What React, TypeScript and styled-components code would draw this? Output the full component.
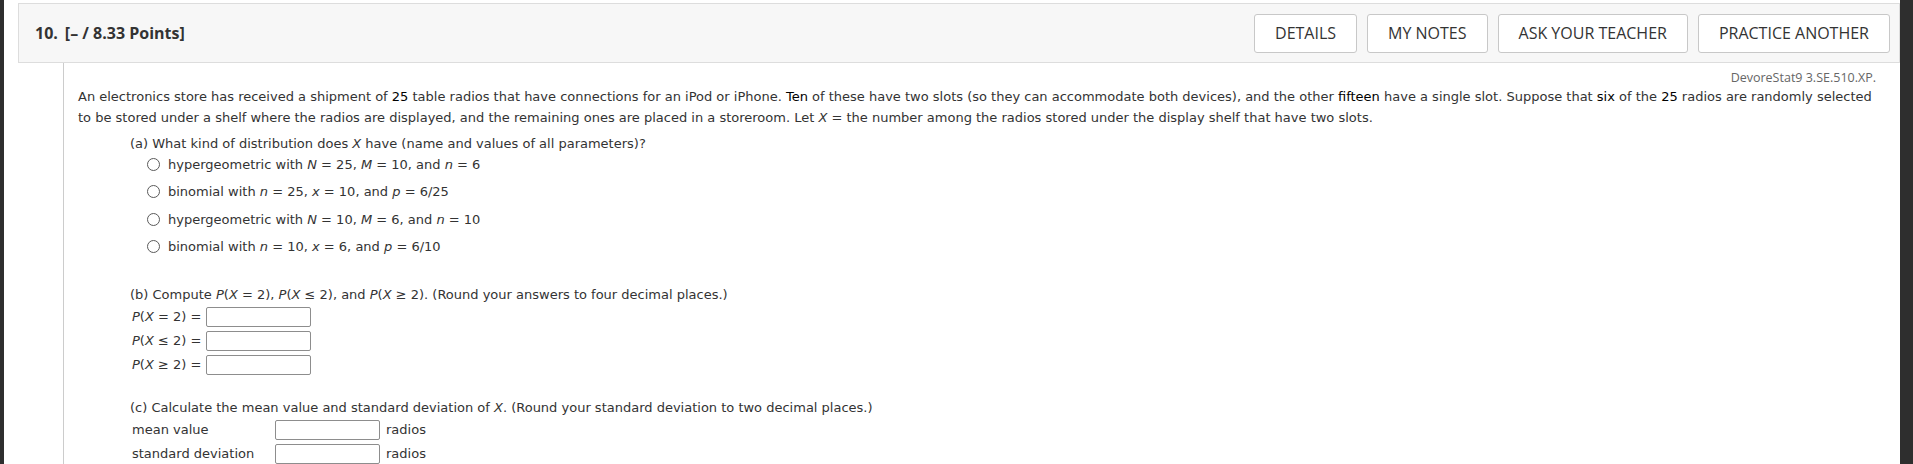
import React from 'react'
import styled, { createGlobalStyle } from 'styled-components'

const GlobalStyle = createGlobalStyle`
    html, body {
        margin: 0;
        background: #ffffff;
        overflow: hidden;
    }
`

const Page = styled.div`
    display: flex;
    height: 464px;
    font-family: "DejaVu Sans", Verdana, sans-serif;
    color: #333333;
`

const EdgeStrip = styled.div<{ $width: number }>`
    width: ${p => p.$width}px;
    flex-shrink: 0;
    background: #2e2e2e;
`

const Main = styled.div`
    flex: 1;
    min-width: 0;
    padding: 3px 0 0 14px;
    display: flex;
    flex-direction: column;
`

const Header = styled.div`
    height: 60px;
    box-sizing: border-box;
    border: 1px solid #dddddd;
    background: #f7f7f7;
    display: flex;
    align-items: center;
    justify-content: space-between;
    padding: 0 9px 0 16px;
    font-family: "Open Sans", "Liberation Sans", sans-serif;
`

const Title = styled.div`
    font-size: 16px;
    font-weight: 700;
    color: #333333;

    .num {
        margin-right: 7px;
    }
`

const ButtonRow = styled.div`
    display: flex;
    gap: 10px;
`

const HeaderButton = styled.button`
    height: 39px;
    box-sizing: border-box;
    padding: 0 20px;
    border: 1px solid #c8c8c8;
    border-radius: 3px;
    background: #ffffff;
    font-family: "Open Sans", "Liberation Sans", sans-serif;
    font-size: 16px;
    font-weight: 500;
    color: #333333;
    text-transform: uppercase;
    cursor: pointer;
`

const Body = styled.div`
    flex: 1;
    margin-left: 45px;
    border-left: 1px solid #cccccc;
    padding: 7px 20px 0 14px;
    font-size: 13px;
`

const Source = styled.div`
    text-align: right;
    font-family: "Open Sans", "Liberation Sans", sans-serif;
    font-size: 12.5px;
    line-height: 16px;
    color: #666666;
    padding-right: 4px;
`

const Paragraph = styled.p`
    margin: 0;
    line-height: 21px;
`

const Hi = styled.span`
    color: #000000;
`

const V = styled.i`
    font-style: italic;
`

const Part = styled.div<{ $top: number }>`
    margin-top: ${p => p.$top}px;
    padding-left: 52px;
`

const Question = styled.div`
    line-height: 20px;
`

const Options = styled.div`
    display: flex;
    flex-direction: column;
    gap: 7.5px;
    padding-left: 17px;
`

const Option = styled.label`
    display: flex;
    align-items: center;
    height: 20px;
    gap: 8px;
`

const Radio = styled.span`
    width: 13px;
    height: 13px;
    box-sizing: border-box;
    border: 1px solid #5a5a5a;
    border-radius: 50%;
    background: #ffffff;
    flex-shrink: 0;
`

const AnswerGrid = styled.div<{ $cols: string }>`
    display: grid;
    grid-template-columns: ${p => p.$cols};
    row-gap: 4px;
    align-items: center;
    margin-top: 2px;
    padding-left: 2px;
`

const Label = styled.span`
    line-height: 20px;
    white-space: nowrap;
`

const AnswerInput = styled.input`
    width: 105px;
    height: 20px;
    box-sizing: border-box;
    border: 1px solid #8d8d8d;
    border-radius: 2px;
    background: #ffffff;
    margin: 0;
    padding: 0 3px;
`

const Unit = styled.span`
    margin-left: 6px;
    line-height: 20px;
`

const options = [
    <>hypergeometric with <V>N</V> = 25, <V>M</V> = 10, and <V>n</V> = 6</>,
    <>binomial with <V>n</V> = 25, <V>x</V> = 10, and <V>p</V> = 6/25</>,
    <>hypergeometric with <V>N</V> = 10, <V>M</V> = 6, and <V>n</V> = 10</>,
    <>binomial with <V>n</V> = 10, <V>x</V> = 6, and <V>p</V> = 6/10</>,
]

const probRows = [
    <><V>P</V>(<V>X</V> = 2) =</>,
    <><V>P</V>(<V>X</V> ≤ 2) =</>,
    <><V>P</V>(<V>X</V> ≥ 2) =</>,
]

const App: React.FC = () => {
    return (
        <>
            <GlobalStyle />
            <Page>
                <EdgeStrip $width={4} />
                <Main>
                    <Header>
                        <Title>
                            <span className="num">10.</span>
                            [– / 8.33 Points]
                        </Title>
                        <ButtonRow>
                            <HeaderButton>Details</HeaderButton>
                            <HeaderButton>My Notes</HeaderButton>
                            <HeaderButton>Ask Your Teacher</HeaderButton>
                            <HeaderButton>Practice Another</HeaderButton>
                        </ButtonRow>
                    </Header>
                    <Body>
                        <Source>DevoreStat9 3.SE.510.XP.</Source>
                        <Paragraph>
                            An electronics store has received a shipment of <Hi>25</Hi> table radios that have connections for an iPod or iPhone. <Hi>Ten</Hi> of these have two slots (so they can accommodate both devices), and the other <Hi>fifteen</Hi> have a single slot. Suppose that <Hi>six</Hi> of the <Hi>25</Hi> radios are randomly selected to be stored under a shelf where the radios are displayed, and the remaining ones are placed in a storeroom. Let <V>X</V> = the number among the radios stored under the display shelf that have two slots.
                        </Paragraph>

                        <Part $top={6}>
                            <Question>(a) What kind of distribution does <V>X</V> have (name and values of all parameters)?</Question>
                            <Options>
                                {options.map((o, i) => (
                                    <Option key={i}>
                                        <Radio />
                                        <span>{o}</span>
                                    </Option>
                                ))}
                            </Options>
                        </Part>

                        <Part $top={28}>
                            <Question>
                                (b) Compute <V>P</V>(<V>X</V> = 2), <V>P</V>(<V>X</V> ≤ 2), and <V>P</V>(<V>X</V> ≥ 2). (Round your answers to four decimal places.)
                            </Question>
                            <AnswerGrid $cols="auto 1fr">
                                {probRows.map((r, i) => (
                                    <React.Fragment key={i}>
                                        <Label>{r}&nbsp;</Label>
                                        <AnswerInput type="text" />
                                    </React.Fragment>
                                ))}
                            </AnswerGrid>
                        </Part>

                        <Part $top={23}>
                            <Question>
                                (c) Calculate the mean value and standard deviation of <V>X</V>. (Round your standard deviation to two decimal places.)
                            </Question>
                            <AnswerGrid $cols="143px 105px 1fr">
                                <Label>mean value</Label>
                                <AnswerInput type="text" />
                                <Unit>radios</Unit>
                                <Label>standard deviation</Label>
                                <AnswerInput type="text" />
                                <Unit>radios</Unit>
                            </AnswerGrid>
                        </Part>
                    </Body>
                </Main>
                <EdgeStrip $width={13} />
            </Page>
        </>
    )
}

export default App
